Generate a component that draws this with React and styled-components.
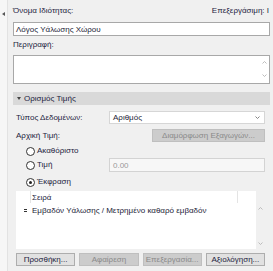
import styled, { createGlobalStyle } from "styled-components";

const GlobalStyle = createGlobalStyle`
  html, body {
    margin: 0;
    padding: 0;
    background: #f0f0f0;
  }
  body {
    font-family: "Liberation Sans", Arial, sans-serif;
    font-size: 8px;
    color: #1d1d38;
  }
`;

const Page = styled.div`
  display: flex;
  width: 273px;
  height: 271px;
  overflow: hidden;
  background: #f0f0f0;
`;

const Side = styled.div`
  width: 8px;
  flex: none;
  background: #f6f6f6;
  border-right: 1px solid #e2e2e2;
  display: flex;
  justify-content: center;
  padding-top: 12px;
  box-sizing: border-box;
`;

const SideArrow = styled.div`
  width: 0;
  height: 0;
  border-top: 2px solid transparent;
  border-bottom: 2px solid transparent;
  border-right: 3px solid #555;
`;

const Panel = styled.div`
  flex: 1;
  display: flex;
  flex-direction: column;
  padding: 6px 3px 0 5px;
  min-width: 0;
`;

const TopRow = styled.div`
  display: flex;
  justify-content: space-between;
  align-items: center;
  height: 10px;
  padding-right: 1px;
  margin-top: ${(p) => p.$mt || 0}px;
`;

const Label = styled.span`
  white-space: nowrap;
  color: #1d1d40;
  line-height: 10px;
`;

const Field = styled.div`
  margin-top: ${(p) => p.$mt || 0}px;
  height: ${(p) => p.$h}px;
  box-sizing: border-box;
  background: #fff;
  border: 1px solid #a8a8a8;
  display: flex;
  align-items: center;
  padding-left: 2px;
  white-space: nowrap;
`;

const TextArea = styled.div`
  margin-top: 5px;
  height: 29px;
  box-sizing: border-box;
  background: #fff;
  border: 1px solid #a8a8a8;
  display: flex;
  justify-content: flex-end;
`;

const ScrollCol = styled.div`
  width: ${(p) => p.$w || 9}px;
  display: flex;
  flex-direction: column;
  justify-content: space-between;
  align-items: center;
  padding: ${(p) => p.$pad || "4px 0"};
  box-sizing: border-box;
`;

const SectionHeader = styled.div`
  margin-top: 8px;
  height: 13px;
  background: #d9d9d9;
  display: flex;
  align-items: center;
  gap: 3px;
  padding-left: 4px;
  color: #1d1d40;
`;

const Caret = styled.div`
  width: 0;
  height: 0;
  border-left: 2px solid transparent;
  border-right: 2px solid transparent;
  border-top: 3px solid #444;
`;

const Body = styled.div`
  display: flex;
  flex-direction: column;
  padding: 0 5px 0 3px;
`;

const Row = styled.div`
  display: grid;
  grid-template-columns: 93px 1fr;
  align-items: center;
  height: ${(p) => p.$h}px;
  margin-top: ${(p) => p.$mt}px;
`;

const Select = styled.div`
  height: 13px;
  box-sizing: border-box;
  background: #fff;
  border: 1px solid #d6d6d6;
  display: flex;
  align-items: center;
  justify-content: space-between;
  padding: 0 4px 0 3px;
`;

const Button = styled.div`
  height: 13px;
  box-sizing: border-box;
  display: flex;
  align-items: center;
  justify-content: center;
  white-space: nowrap;
  overflow: hidden;
  background: ${(p) => (p.$disabled ? "#cccccc" : "#e1e1e1")};
  border: 1px solid ${(p) => (p.$disabled ? "#bfbfbf" : "#adadad")};
  color: ${(p) => (p.$disabled ? "#8a8a8a" : "#1d1d40")};
`;

const ShapeButton = styled(Button)`
  justify-self: end;
  width: 113px;
`;

const ValueInput = styled.div`
  height: 14px;
  box-sizing: border-box;
  background: #f7f7f7;
  border: 1px solid #d3d3d3;
  color: #9a9a9a;
  display: flex;
  align-items: center;
  padding-left: 3px;
`;

const RadioWrap = styled.div`
  display: flex;
  align-items: center;
  gap: 2px;
  padding-left: 10px;
`;

const Circle = styled.div`
  width: 7px;
  height: 7px;
  border-radius: 50%;
  border: 1px solid #333;
  background: #fff;
  display: flex;
  align-items: center;
  justify-content: center;
  &::after {
    content: "";
    width: 3px;
    height: 3px;
    border-radius: 50%;
    background: ${(p) => (p.$on ? "#222" : "transparent")};
  }
`;

const List = styled.div`
  margin-top: 3px;
  height: 58px;
  display: flex;
`;

const ListMain = styled.div`
  flex: 1;
  background: #fff;
  display: flex;
  flex-direction: column;
`;

const ListHead = styled.div`
  height: 12px;
  display: grid;
  grid-template-columns: 15px 207px 1fr;
  align-items: stretch;
`;

const HeadCell = styled.div`
  border-right: ${(p) => (p.$sep ? "1px solid #e4e4e4" : "none")};
  display: flex;
  align-items: center;
  padding-left: ${(p) => p.$pl || 0}px;
  color: #1d1d40;
`;

const ListRow = styled.div`
  height: 12px;
  display: grid;
  grid-template-columns: 16px 1fr;
  align-items: center;
  margin-top: 1px;
  white-space: nowrap;
`;

const Grip = styled.div`
  display: flex;
  flex-direction: column;
  align-items: center;
  gap: 1px;
  padding-left: 3px;
  span {
    width: 3px;
    height: 1px;
    background: #333;
  }
`;

const Buttons = styled.div`
  margin-top: 4px;
  display: grid;
  grid-template-columns: repeat(4, 1fr);
  gap: 4px;
`;

function Chevron({ up }) {
  return (
    <svg width="5" height="3" viewBox="0 0 5 3">
      <path
        d={up ? "M0.5 2.5 L2.5 0.5 L4.5 2.5" : "M0.5 0.5 L2.5 2.5 L4.5 0.5"}
        fill="none"
        stroke="#b5b5b5"
        strokeWidth="0.9"
      />
    </svg>
  );
}

function Radio({ on, children }) {
  return (
    <RadioWrap>
      <Circle $on={on} />
      <Label>{children}</Label>
    </RadioWrap>
  );
}

export default function App() {
  return (
    <>
      <GlobalStyle />
      <Page>
        <Side>
          <SideArrow />
        </Side>
        <Panel>
          <TopRow>
            <Label>Όνομα Ιδιότητας:</Label>
            <Label>Επεξεργάσιμη: Ι</Label>
          </TopRow>
          <Field $mt={6} $h={14}>
            Λόγος Υάλωσης Χώρου
          </Field>
          <TopRow $mt={4}>
            <Label>Περιγραφή:</Label>
          </TopRow>
          <TextArea>
            <ScrollCol $pad="5px 0 6px">
              <Chevron up />
              <Chevron />
            </ScrollCol>
          </TextArea>

          <SectionHeader>
            <Caret />
            <span>Ορισμός Τιμής</span>
          </SectionHeader>

          <Body>
            <Row $h={13} $mt={6}>
              <Label>Τύπος Δεδομένων:</Label>
              <Select>
                <span>Αριθμός</span>
                <svg width="5" height="3" viewBox="0 0 5 3">
                  <path d="M0.5 0.5 L2.5 2.5 L4.5 0.5" fill="none" stroke="#777" strokeWidth="0.9" />
                </svg>
              </Select>
            </Row>
            <Row $h={13} $mt={5}>
              <Label>Αρχική Τιμή:</Label>
              <ShapeButton $disabled>Διαμόρφωση Εξαγωγών...</ShapeButton>
            </Row>
            <Row $h={12} $mt={3}>
              <Radio>Ακαθόριστο</Radio>
            </Row>
            <Row $h={14} $mt={1}>
              <Radio>Τιμή</Radio>
              <ValueInput>0.00</ValueInput>
            </Row>
            <Row $h={12} $mt={4}>
              <Radio on>Έκφραση</Radio>
            </Row>

            <List>
              <ListMain>
                <ListHead>
                  <HeadCell $sep />
                  <HeadCell $sep $pl={1}>
                    Σειρά
                  </HeadCell>
                  <HeadCell />
                </ListHead>
                <ListRow>
                  <Grip>
                    <span />
                    <span />
                  </Grip>
                  <span>Εμβαδόν Υάλωσης / Μετρημένο καθαρό εμβαδόν</span>
                </ListRow>
              </ListMain>
              <ScrollCol $w={9} $pad="16px 0 4px">
                <Chevron up />
                <Chevron />
              </ScrollCol>
            </List>

            <Buttons>
              <Button>Προσθήκη...</Button>
              <Button $disabled>Αφαίρεση</Button>
              <Button $disabled>Επεξεργασία...</Button>
              <Button>Αξιολόγηση...</Button>
            </Buttons>
          </Body>
        </Panel>
      </Page>
    </>
  );
}
